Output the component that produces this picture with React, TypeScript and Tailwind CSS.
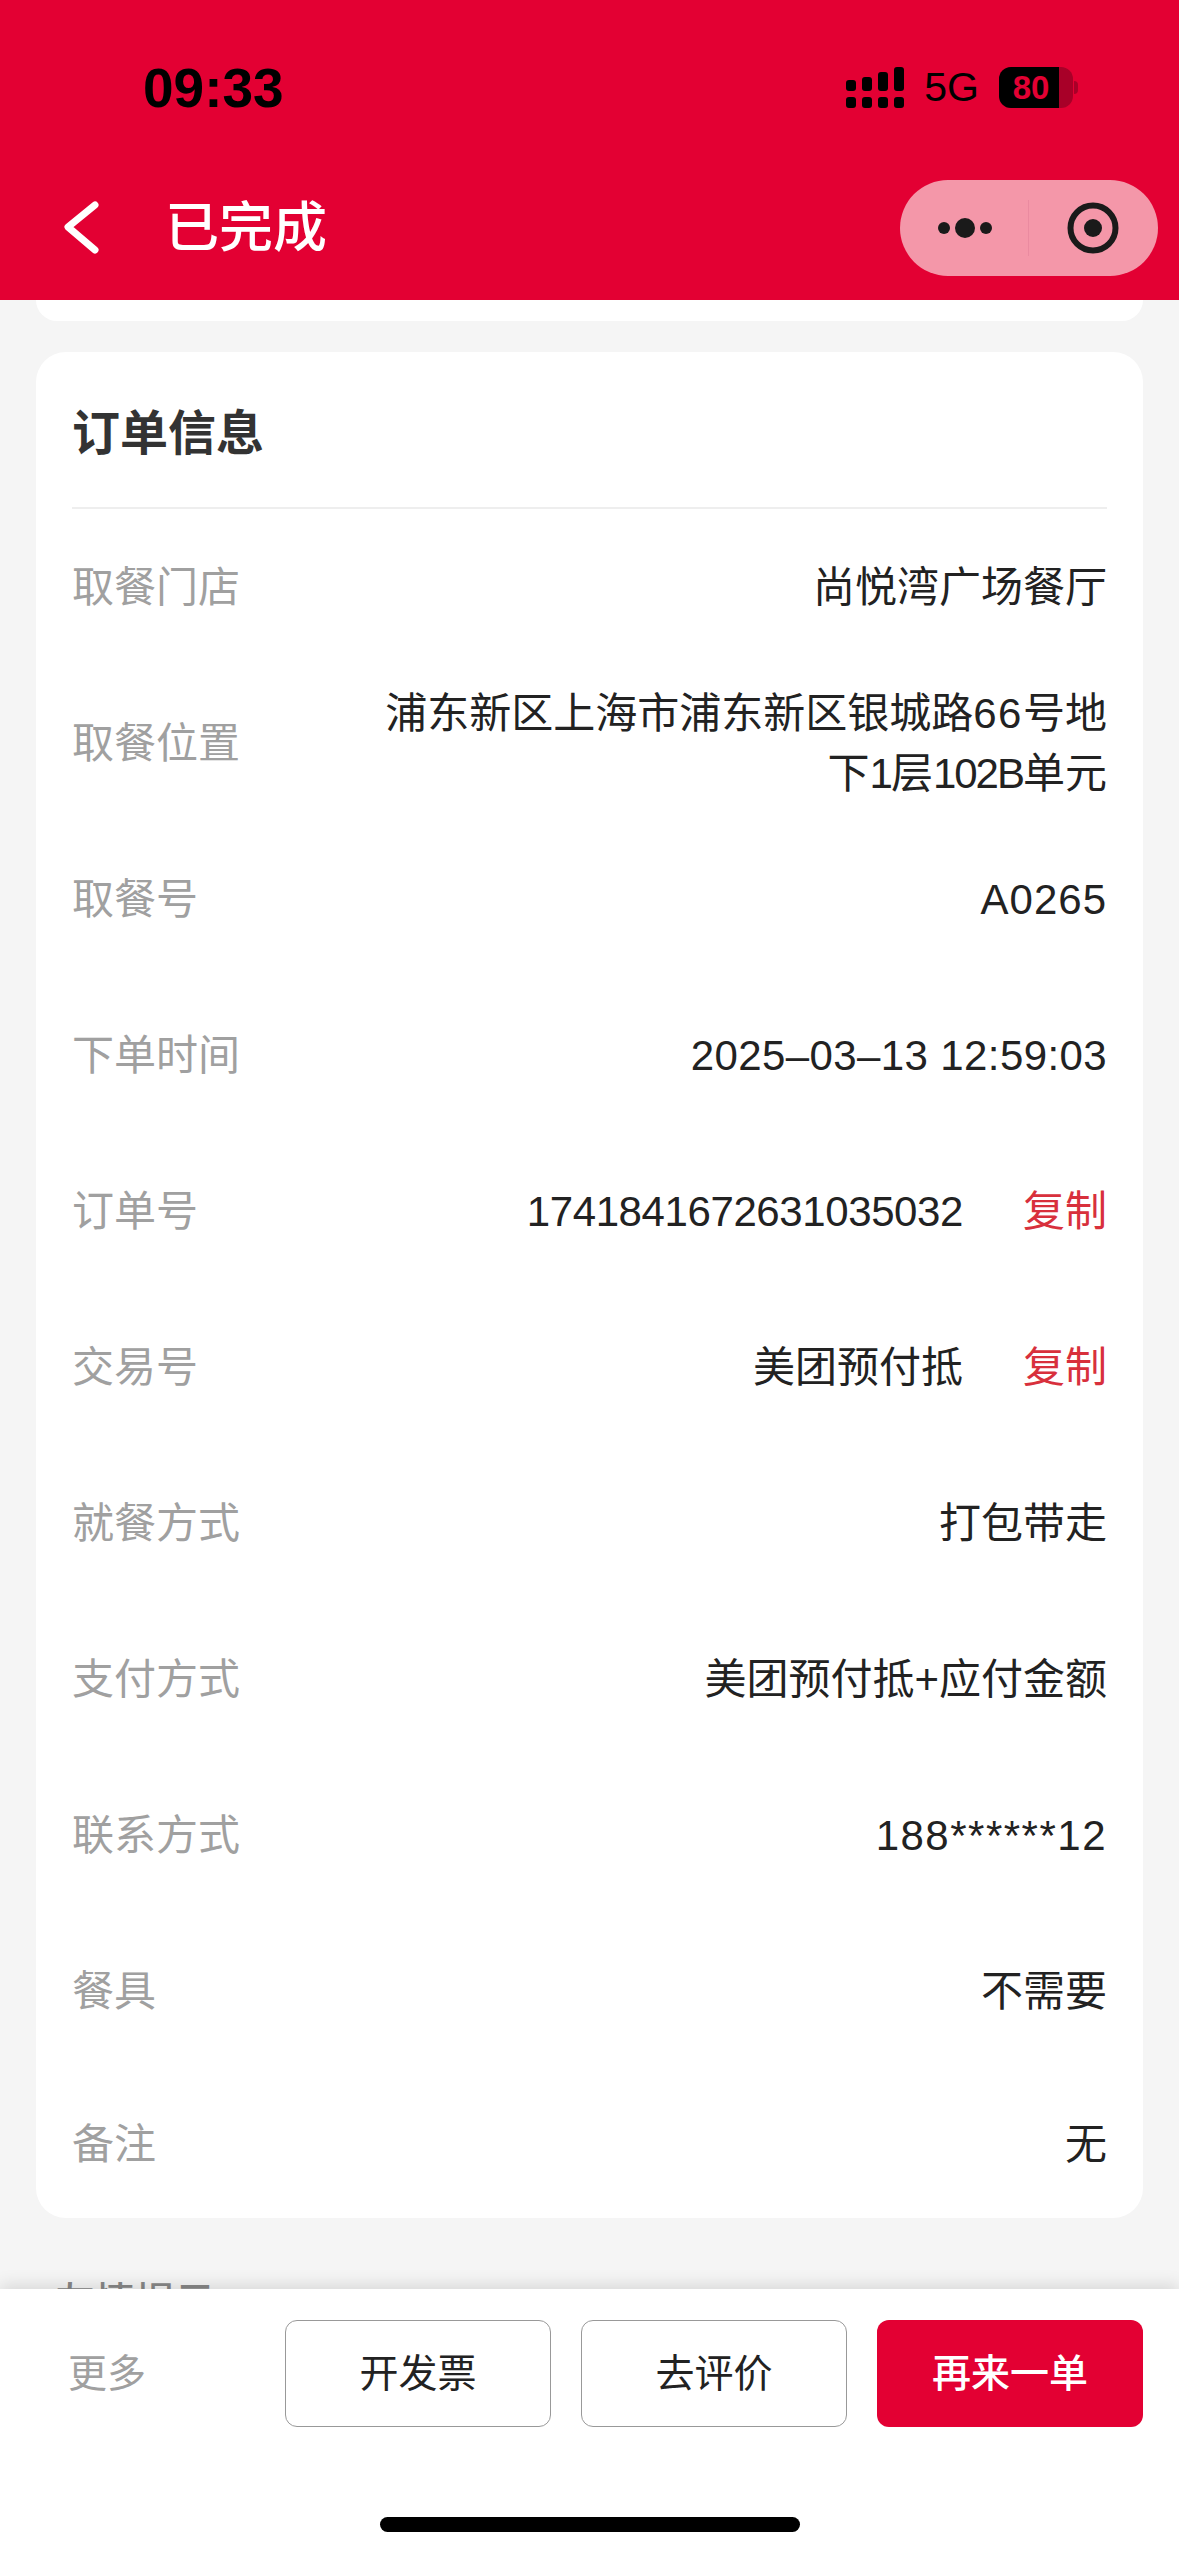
import React from "react";

interface OrderRow {
  label: string;
  value: React.ReactNode;
  copy?: boolean;
  // 数字行的字距单独调
  spacing?: string;
}

const rows: OrderRow[] = [
  { label: "取餐门店", value: "尚悦湾广场餐厅" },
  {
    label: "取餐位置",
    value: (
      <>
        浦东新区上海市浦东新区银城路<span className="tracking-[1.5px]">66</span>号地
        <br />
        下<span className="tracking-[-2px]">1</span>层<span className="tracking-[-2px]">102B</span>单元
      </>
    ),
  },
  { label: "取餐号", value: "A0265", spacing: "tracking-[1px]" },
  { label: "下单时间", value: "2025–03–13 12:59:03", spacing: "tracking-[0.4px]" },
  { label: "订单号", value: "1741841672631035032", copy: true, spacing: "tracking-[-0.4px]" },
  { label: "交易号", value: "美团预付抵", copy: true },
  { label: "就餐方式", value: "打包带走" },
  { label: "支付方式", value: "美团预付抵+应付金额" },
  { label: "联系方式", value: "188******12", spacing: "tracking-[1.5px]" },
  { label: "餐具", value: "不需要" },
];

function SignalIcon() {
  return (
    <svg width="58" height="41" viewBox="0 0 58 41" fill="currentColor">
      <rect x="0" y="13" width="10" height="11" rx="3" />
      <rect x="16" y="10" width="10" height="14" rx="3" />
      <rect x="32" y="5" width="10" height="19" rx="3" />
      <rect x="48" y="0" width="10" height="24" rx="3" />
      <rect x="0" y="30" width="10" height="11" rx="3" />
      <rect x="16" y="30" width="10" height="11" rx="3" />
      <rect x="32" y="30" width="10" height="11" rx="3" />
      <rect x="48" y="30" width="10" height="11" rx="3" />
    </svg>
  );
}

function Battery() {
  return (
    <div className="flex items-center">
      <div className="flex h-[41px] w-[74px] overflow-hidden rounded-[12px] bg-[#a80028]">
        <div className="flex h-full w-[60px] items-center justify-center bg-black pl-[4px] text-[33px] font-bold text-[#e30033]">
          80
        </div>
      </div>
      <div className="ml-[1px] h-[13px] w-[4px] rounded-r-full bg-[#a80028]" />
    </div>
  );
}

function Row({ label, value, copy, spacing }: OrderRow) {
  return (
    <div className="flex h-[156px] items-center justify-between pt-[1px]">
      <span className="shrink-0 text-[#a0a0a0]">{label}</span>
      <div className="flex items-center">
        <span className={`text-right leading-[60px] text-[#222222] ${spacing ?? ""}`}>{value}</span>
        {copy && <span className="ml-[60px] text-[#d8303c]">复制</span>}
      </div>
    </div>
  );
}

export default function App() {
  return (
    <div className="relative flex h-[2556px] w-[1179px] flex-col overflow-hidden bg-[#f5f5f5] font-['Liberation_Sans','Noto_Sans_CJK_SC',sans-serif] text-[42px]">
      {/* 顶部红色导航 */}
      <header className="h-[300px] shrink-0 bg-[#e30033]">
        <div className="flex h-[180px] items-start justify-between pl-[143px] pr-[101px] pt-[60px] text-black">
          <span className="text-[55px] font-bold leading-[56px]">09:33</span>
          <div className="flex items-center pt-[7px]">
            <SignalIcon />
            <span className="ml-[20px] text-[41px] leading-[41px]">5G</span>
            <div className="ml-[20px]">
              <Battery />
            </div>
          </div>
        </div>
        <div className="flex h-[96px] items-center justify-between pl-[60px] pr-[21px]">
          <div className="flex items-center">
            <svg width="44" height="56" viewBox="0 0 44 56" fill="none" stroke="#ffffff" strokeWidth="7" strokeLinecap="round" strokeLinejoin="round">
              <path d="M35 5 L8 27 L35 50" />
            </svg>
            <span className="ml-[61px] text-[54px] font-medium leading-[60px] text-white">已完成</span>
          </div>
          <div className="flex h-[96px] w-[258px] items-center rounded-full bg-[#f497a9]">
            <div className="flex h-[56px] w-[129px] items-center justify-center gap-[5px] border-r border-[#ea8aa0] pl-[2px]">
              <span className="h-[12px] w-[12px] rounded-full bg-[#1a1a1a]" />
              <span className="h-[20px] w-[20px] rounded-full bg-[#1a1a1a]" />
              <span className="h-[12px] w-[12px] rounded-full bg-[#1a1a1a]" />
            </div>
            <div className="flex flex-1 items-center justify-center pr-[2px]">
              <svg width="52" height="52" viewBox="0 0 52 52">
                <circle cx="26" cy="26" r="22.5" fill="none" stroke="#1a1a1a" strokeWidth="6" />
                <circle cx="26" cy="26" r="9" fill="#1a1a1a" />
              </svg>
            </div>
          </div>
        </div>
      </header>

      {/* 上一张卡片的底部 */}
      <div className="mx-[36px] h-[21px] shrink-0 rounded-b-[24px] bg-white" />

      {/* 订单信息 */}
      <section className="mx-[36px] mt-[31px] h-[1866px] shrink-0 rounded-[30px] bg-white px-[36px]">
        <div className="flex h-[157px] items-center border-b-2 border-[#eeeeee] pt-[9px] text-[48px] font-bold text-[#333333]">
          订单信息
        </div>
        {rows.map((row) => (
          <Row key={row.label} {...row} />
        ))}
        <div className="-mt-[3px] flex h-[156px] items-center justify-between">
          <span className="text-[#a0a0a0]">备注</span>
          <span className="text-[#222222]">无</span>
        </div>
      </section>

      <div className="ml-[55px] mt-[60px] text-[40px] font-medium leading-[48px] text-[#888888]">友情提示</div>

      {/* 底部操作栏 */}
      <footer className="absolute inset-x-0 bottom-0 h-[267px] bg-white shadow-[0_-4px_16px_rgba(0,0,0,0.12)]">
        <div className="flex items-center pl-[68px] pr-[36px] pt-[31px] text-[39px]">
          <span className="flex-1 pt-[2px] text-[#a0a0a0]">更多</span>
          <button className="h-[107px] w-[266px] rounded-[12px] border border-[#999999] pt-[2px] text-[#222222]">开发票</button>
          <button className="ml-[30px] h-[107px] w-[266px] rounded-[12px] border border-[#999999] pt-[2px] text-[#222222]">去评价</button>
          <button className="ml-[30px] h-[107px] w-[266px] rounded-[12px] bg-[#e30033] pt-[2px] font-medium text-white">再来一单</button>
        </div>
        <div className="mx-auto mt-[90px] h-[15px] w-[420px] rounded-full bg-black" />
      </footer>
    </div>
  );
}
